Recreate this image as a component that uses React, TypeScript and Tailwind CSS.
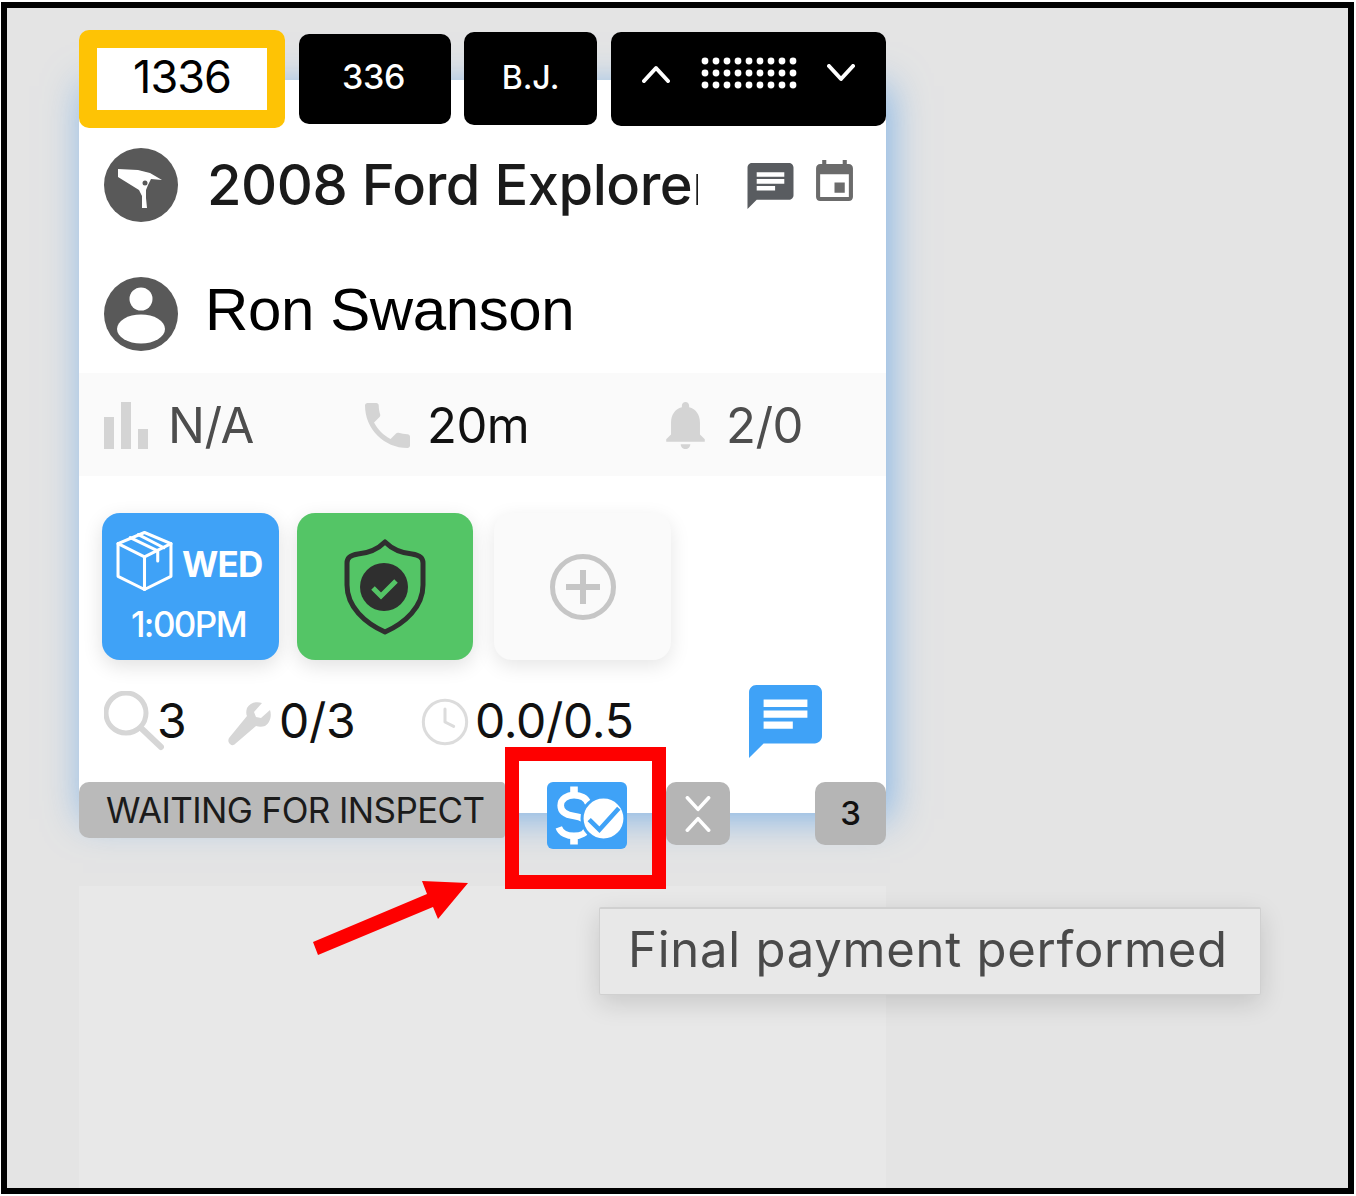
import { Clock } from "lucide-react";

const P = "font-['Inter',sans-serif]";

function Chat({ className }: { className: string }) {
  return (
    <svg viewBox="2 2 20 20" className={className} fill="currentColor">
      <path d="M20 2H4c-1.1 0-1.99.9-1.99 2L2 22l4-4h14c1.1 0 2-.9 2-2V4c0-1.1-.9-2-2-2zM6 9h12v2H6V9zm8 5H6v-2h8v2zm4-6H6V6h12v2z" />
    </svg>
  );
}

function Dots() {
  const cols = [0, 1, 2, 3, 4, 5, 6, 7, 8];
  const rows = [0, 1, 2];
  return (
    <svg width="96" height="34" viewBox="0 0 96 34" fill="#fff">
      {rows.map((r) => cols.map((c) => <circle key={`${r}-${c}`} cx={4 + c * 11} cy={5 + r * 12} r="3.4" />))}
    </svg>
  );
}

function Chevron({ up, className }: { up?: boolean; className: string }) {
  return (
    <svg viewBox="0 0 28 18" className={className} fill="none" stroke="#fff" strokeWidth="4" strokeLinecap="round" strokeLinejoin="round">
      <polyline points={up ? "2,16 14,3 26,16" : "2,2 14,15 26,2"} />
    </svg>
  );
}

export default function App() {
  return (
    <div className="h-[1196px] w-[1356px] overflow-hidden bg-white pl-[1px] pt-[2px]">
      <div className="relative h-[1192px] w-[1353px] overflow-hidden border-[6px] border-black bg-[#e4e4e4] pl-[72px] pt-[72px]">
        {/* Main card */}
        <div className={`flow-root h-[733px] w-[807px] bg-white shadow-[4px_6px_36px_rgba(66,148,232,0.6)] ${P}`}>
          {/* Tabs */}
          <div className="-mt-[50px] flex h-[98px] items-start text-white">
            <div className="relative h-[98px] w-[206px] rounded-[10px] bg-[#fec305] p-[18px]">
              <div className="flex h-[62px] items-center justify-center bg-white pb-[6px] text-[45px] leading-none tracking-[-1px] text-black">1336</div>
            </div>
            <div className="ml-[14px] mt-[4px] flex h-[90px] w-[152px] items-center justify-center rounded-[10px] bg-black pb-[4px] pr-[3px] text-[34px] font-medium leading-none tracking-[-0.3px]">336</div>
            <div className="ml-[13px] mt-[2px] flex h-[93px] w-[133px] items-center justify-center rounded-[10px] bg-black pb-[2px] text-[32px] font-medium leading-none">B.J.</div>
            <div className="ml-[14px] mt-[2px] flex h-[94px] w-[275px] items-start justify-between rounded-[10px] bg-black px-[31px] pt-[24px]">
              <Chevron up className="mt-[9px] h-[18px] w-[28px]" />
              <Dots />
              <Chevron className="mt-[8px] h-[18px] w-[28px]" />
            </div>
          </div>

          {/* Vehicle */}
          <div className="mt-[20px] flex h-[74px] items-center pl-[25px]">
            <svg viewBox="0 0 74 74" className="h-[74px] w-[74px] shrink-0">
              <circle cx="37" cy="37" r="37" fill="#595959" />
              <path d="M14 21L34 22L46 25L58 32L47 31L44 37L42 42L42 50L43 60L38 60L38 48L35 42L14 29Z" fill="#fff" />
              <circle cx="41" cy="35" r="2.5" fill="#595959" />
            </svg>
            <div className="ml-[29px] h-[70px] w-[491px] shrink-0 overflow-hidden whitespace-nowrap text-[56px] font-[450] leading-[70px] tracking-[-0.45px] text-[#1a1a1a]">2008 Ford Explorer</div>
            <Chat className="ml-[48px] mt-[2px] h-[46px] w-[49px] text-[#595c60]" />
            <svg viewBox="3 1 18 20" className="ml-[19px] -mt-[10px] h-[41px] w-[41px] text-[#6b6b6b]" fill="currentColor">
              <path d="M17 12h-5v5h5v-5zM16 1v2H8V1H6v2H5c-1.11 0-1.99.9-1.99 2L3 19c0 1.1.89 2 2 2h14c1.1 0 2-.9 2-2V5c0-1.1-.9-2-2-2h-1V1h-2zm3 18H5V8h14v11z" />
            </svg>
          </div>

          {/* Customer */}
          <div className="mt-[55px] flex h-[74px] items-center pl-[25px]">
            <svg viewBox="0 0 74 74" className="h-[74px] w-[74px] shrink-0">
              <circle cx="37" cy="37" r="37" fill="#595959" />
              <circle cx="37" cy="22" r="11.5" fill="#fff" />
              <ellipse cx="37" cy="52" rx="24" ry="14.5" fill="#fff" />
            </svg>
            <div className="ml-[27px] pb-[8px] font-['Liberation_Sans',sans-serif] text-[60px] leading-none tracking-[-0.4px] text-black">Ron Swanson</div>
          </div>

          {/* Stats */}
          <div className="relative mt-[22px] flex h-[103px] items-center bg-[#fafafa] pl-[25px] pt-[2px] text-[49px] leading-none tracking-[-0.5px]">
            <svg viewBox="0 0 44 47" className="h-[47px] w-[44px] shrink-0" fill="#d4d4d4">
              <rect x="0" y="15" width="10" height="32" />
              <rect x="17" y="0" width="10" height="47" />
              <rect x="34" y="27" width="10" height="20" />
            </svg>
            <span className="ml-[20px] w-[197px] text-[#4d4d4d]">N/A</span>
            <svg viewBox="3 3 18 18" className="h-[45px] w-[45px] shrink-0 text-[#d4d4d4]" fill="currentColor">
              <path d="M6.62 10.79c1.44 2.83 3.76 5.14 6.59 6.59l2.2-2.2c.27-.27.67-.36 1.02-.24 1.12.37 2.33.57 3.57.57.55 0 1 .45 1 1V20c0 .55-.45 1-1 1-9.39 0-17-7.61-17-17 0-.55.45-1 1-1h3.5c.55 0 1 .45 1 1 0 1.25.2 2.45.57 3.57.11.35.03.74-.25 1.02l-2.2 2.2z" />
            </svg>
            <span className="ml-[17px] w-[238px] text-[#111]">20m</span>
            <svg viewBox="4 2.5 16 19.5" className="h-[47px] w-[41px] shrink-0 text-[#d4d4d4]" fill="currentColor">
              <path d="M12 22c1.1 0 2-.9 2-2h-4c0 1.1.89 2 2 2zm6-6v-5c0-3.07-1.64-5.64-4.5-6.32V4c0-.83-.67-1.5-1.5-1.5s-1.5.67-1.5 1.5v.68C7.63 5.36 6 7.92 6 11v5l-2 2v1h16v-1l-2-2z" />
            </svg>
            <span className="ml-[20px] text-[#4d4d4d]">2/0</span>
          </div>

          {/* Tiles */}
          <div className="mt-[37px] flex h-[147px] pl-[23px]">
            <div className="flex h-[147px] w-[177px] flex-col rounded-[18px] bg-[#3fa2f7] text-white shadow-[0_6px_20px_rgba(0,0,0,0.12)]">
              <div className="flex items-center pl-[14px] pt-[17px]">
                <svg viewBox="0 0 56 60" className="h-[62px] w-[57px] shrink-0" fill="none" stroke="currentColor" strokeWidth="3" strokeLinejoin="round" strokeLinecap="round">
                  <path d="M28 2L54 13V45L28 58L2 45V13Z" />
                  <path d="M2 13L28 26L54 13" />
                  <path d="M28 26V58" />
                  <path d="M14 7L41 20V30" />
                  <path d="M22 4L47 17" />
                </svg>
                <span className="ml-[9px] mt-[6px] text-[35px] font-bold leading-none tracking-[-0.8px]">WED</span>
              </div>
              <div className="mt-[15px] pr-[4px] text-center text-[35px] font-medium leading-none tracking-[-1.6px]">1:00PM</div>
            </div>
            <div className="ml-[18px] flex h-[147px] w-[176px] items-center justify-center rounded-[18px] bg-[#54c566] shadow-[0_6px_20px_rgba(0,0,0,0.12)]">
              <svg viewBox="0 0 84 96" className="h-[96px] w-[84px]">
                <path d="M42 3c7 7 16 11 27 12 7 1 11 3 11 9v22c0 22-18 38-38 47C22 84 4 68 4 46V24c0-6 4-8 11-9 11-1 20-5 27-12z" fill="none" stroke="#2f2f2f" strokeWidth="5" strokeLinejoin="round" />
                <circle cx="41" cy="48" r="24" fill="#2f2f2f" />
                <path d="M30 49l8 8 15-15" fill="none" stroke="#54c566" strokeWidth="5" />
              </svg>
            </div>
            <div className="ml-[21px] flex h-[147px] w-[177px] items-center justify-center rounded-[18px] bg-[#fafafa] shadow-[0_6px_20px_rgba(0,0,0,0.1)]">
              <svg viewBox="0 0 66 66" className="h-[66px] w-[66px]" fill="none" stroke="#c6c6c6">
                <circle cx="33" cy="33" r="30.5" strokeWidth="5" />
                <path d="M33 16V50M16 33H50" strokeWidth="6" />
              </svg>
            </div>
          </div>

          {/* Counters */}
          <div className="mt-[25px] flex h-[73px] items-start pl-[25px] text-[48px] leading-none tracking-[-0.3px] text-[#111]">
            <svg viewBox="0 0 60 60" className="mt-[6px] h-[60px] w-[60px] shrink-0" fill="none" stroke="#d6d6d6" strokeLinecap="round">
              <circle cx="22" cy="22" r="20" strokeWidth="5" />
              <path d="M37 37L57 56" strokeWidth="6" />
            </svg>
            <span className="-ml-[7px] mt-[12px] w-[71px]">3</span>
            <svg viewBox="0 0 44 44" className="mt-[17px] h-[44px] w-[44px] shrink-0 text-[#d6d6d6]" fill="currentColor">
              <path d="M42 8l-9 8-5-1-2-5 8-9c-6-2-12 0-15 5-1 3-1 6 0 8L1 36c-1 2-1 4 1 6 2 2 4 1 5 0l21-18c3 1 6 1 9 0 5-3 7-10 5-16z" />
            </svg>
            <span className="ml-[7px] mt-[12px] w-[140px]">0/3</span>
            <Clock size={52} strokeWidth={1.4} className="mt-[11px] shrink-0 text-[#dcdcdc]" />
            <span className="ml-[4px] mt-[12px] w-[274px]">0.0/0.5</span>
            <Chat className="h-[73px] w-[73px] shrink-0 text-[#3fa2f7]" />
          </div>

          {/* Status strip */}
          <div className="mt-[24px] flex h-[66px] items-start">
            <div className="flex h-[56px] w-[426px] items-center rounded-l-[10px] rounded-r-[4px] bg-[#bababa] pl-[27px] text-[35px] leading-none tracking-[-0.6px] text-[#1b1b1b]">WAITING FOR INSPECT</div>
            <div className="relative ml-[42px] h-[67px] w-[80px] rounded-[6px] bg-[#3fa2f7]">
              <svg viewBox="0 0 40 62" className="absolute left-[8px] top-[3px] h-[60px] w-[38px]" fill="none" stroke="#fff" strokeWidth="7">
                <path d="M35 19c-2-6-8-9-15-9S6 14 6 21s6 10 14 11c8 1 14 4 14 11s-7 10-14 10S6 50 4 44" />
                <path d="M20 1V10M20 53V62" strokeWidth="8" />
              </svg>
              <svg viewBox="0 0 46 46" className="absolute left-[33px] top-[13px] h-[47px] w-[47px]">
                <circle cx="23" cy="23" r="21" fill="#fff" stroke="#3fa2f7" strokeWidth="3" />
                <path d="M9 24l10 10L38 13" fill="none" stroke="#3fa2f7" strokeWidth="4.5" />
              </svg>
            </div>
            <div className="ml-[39px] flex h-[63px] w-[64px] flex-col items-center justify-center gap-[4px] rounded-[10px] bg-[#b5b5b5]">
              <Chevron className="h-[16px] w-[26px]" />
              <Chevron up className="h-[16px] w-[26px]" />
            </div>
            <div className="ml-[85px] flex h-[63px] w-[71px] items-center justify-center rounded-[10px] bg-[#b5b5b5] text-[33px] font-medium leading-none text-[#111]">3</div>
          </div>
        </div>

        {/* Second, faded card */}
        <div className="mt-[73px] h-[310px] w-[807px] bg-[#e8e8e8]" />

        {/* Red annotation box */}
        <div className="absolute left-[498px] top-[739px] h-[142px] w-[161px] border-[14px] border-[#fe0000]" />

        {/* Arrow */}
        <svg className="absolute left-[300px] top-[865px] h-[85px] w-[170px]" viewBox="0 0 170 85" fill="#fe0000">
          <polygon points="6,69 120,21 115,8 161,10 131,46 126,34 11,82" />
        </svg>

        {/* Tooltip */}
        <div className={`absolute left-[592px] top-[899px] flex h-[88px] w-[662px] items-center rounded-[2px] border border-t-[2px] border-[#d0d0d0] bg-[#e8e8e8] pb-[4px] pl-[28px] text-[49px] leading-none tracking-[0.75px] text-[#4a4a4a] shadow-[0_8px_26px_rgba(0,0,0,0.14)] ${P}`}>
          Final payment performed
        </div>
      </div>
    </div>
  );
}
